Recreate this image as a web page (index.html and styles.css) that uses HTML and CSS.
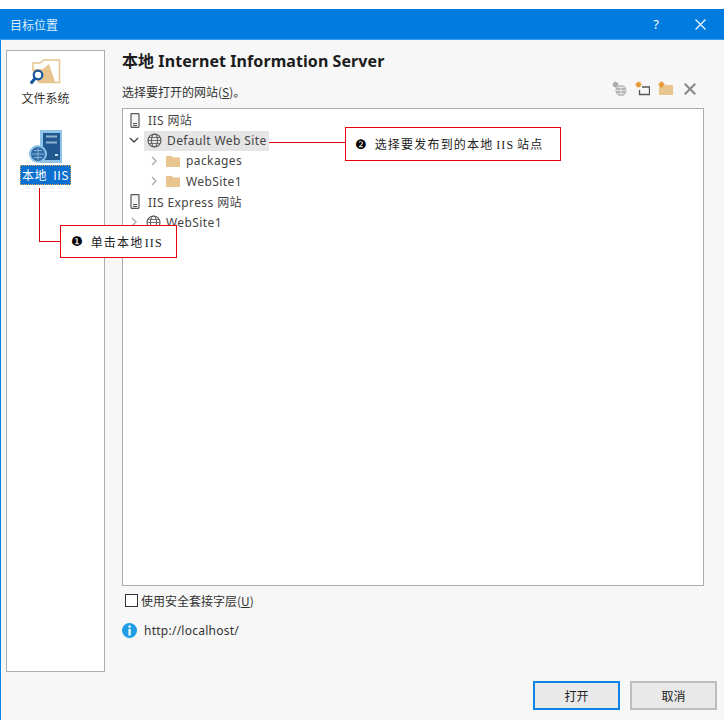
FILE: index.html
```html
<!DOCTYPE html>
<html lang="zh">
<head>
<meta charset="utf-8">
<title>目标位置</title>
<link rel="stylesheet" href="styles.css">
</head>
<body>
<div class="dialog">
  <header class="titlebar">
    <span class="title">目标位置</span>
    <div class="title-actions">
      <span class="help">?</span>
      <svg class="close" width="11" height="11" viewBox="0 0 11 11"><path d="M.5.5l10 10M10.500.5l-10 10" stroke="#fff" stroke-width="1.100" fill="none"/></svg>
    </div>
  </header>
  <div class="content">
    <aside class="sidebar">
      <div class="side-item first">
        <svg width="31" height="27" viewBox="0 0 31 27">
          <path d="M3 12V5h7l4-3h15.500v22.500H9z" fill="#fff" stroke="#e6c48c" stroke-width="1.500"/>
          <path d="M3 11h10l6-5 6.500 19H9z" fill="#e8c58e"/>
          <circle cx="8" cy="17" r="4.300" fill="#fff" stroke="#15599c" stroke-width="2.200"/>
          <path d="M5 20.500L.8 25.500" stroke="#15599c" stroke-width="3"/>
        </svg>
        <span class="side-label">文件系统</span>
      </div>
      <div class="side-item second">
        <svg width="33" height="33" viewBox="0 0 33 33">
          <rect x="11" y="0" width="22" height="33" fill="#8fc3ea"/>
          <rect x="14" y="3" width="17" height="27" fill="#20588f"/>
          <path d="M17 6.500h11M17 12.500h11" stroke="#8fb4d4" stroke-width="2"/>
          <rect x="26" y="24" width="3" height="2" fill="#cfe0ee"/>
          <circle cx="9" cy="24" r="9" fill="#8fc3ea"/>
          <circle cx="9" cy="24" r="7" fill="#2f6ba6"/>
          <path d="M3 24h12M9 18v12M5 20.500h8M5 27.500h8" stroke="#9cc0de" stroke-width=".8" fill="none"/>
        </svg>
        <span class="side-label selected">本地 IIS</span>
      </div>
    </aside>
    <main class="main">
      <h1 class="heading">本地 Internet Information Server</h1>
      <div class="toolbar-row">
        <span class="prompt">选择要打开的网站(<u>S</u>)。</span>
        <div class="tools">
          <svg width="15" height="15" viewBox="0 0 15 15">
            <path d="M3.500.5v6M.5 3.500h6M1.500 1.500l4 4M5.500 1.500l-4 4" stroke="#a8a8a8" stroke-width="1.300"/>
            <circle cx="9" cy="9.500" r="5.500" fill="#b5b5b5"/>
            <path d="M4 9.500h10M9 4.500v10M5.500 6.500h7M5.500 12.500h7" stroke="#eee" stroke-width=".8"/>
          </svg>
          <svg width="15" height="15" viewBox="0 0 15 15">
            <path d="M3.500.5v6M.5 3.500h6M1.500 1.500l4 4M5.500 1.500l-4 4" stroke="#e59a35" stroke-width="1.300"/>
            <path d="M7 6h7.500v7.500h-10V9" fill="none" stroke="#555" stroke-width="1.300"/>
          </svg>
          <svg width="15" height="15" viewBox="0 0 15 15">
            <path d="M1 6h4l2-2h8v10H1z" fill="#e8c58e"/>
            <path d="M3.500.5v6M.5 3.500h6M1.500 1.500l4 4M5.500 1.500l-4 4" stroke="#e59a35" stroke-width="1.300"/>
          </svg>
          <svg class="tool-x" width="12" height="12" viewBox="0 0 12 12"><path d="M.7.7l10.600 10.600M11.300.7L.7 11.300" stroke="#888" stroke-width="2" fill="none"/></svg>
        </div>
      </div>
      <div class="tree">
        <div class="row lvl0"><svg width="10" height="15" viewBox="0 0 10 15"><rect x="1" y=".6" width="8" height="13.800" rx=".8" fill="#f4f4f4" stroke="#555" stroke-width="1.200"/><path d="M3 10.500h4M3 12.500h4" stroke="#555"/></svg><span>IIS 网站</span></div>
        <div class="row lvl1">
          <svg width="10" height="7" viewBox="0 0 10 7"><path d="M1 1l4 4 4-4" fill="none" stroke="#444" stroke-width="1.400"/></svg>
          <span class="site-selected">
            <svg width="15" height="15" viewBox="0 0 15 15"><circle cx="7.500" cy="7.500" r="6.500" fill="none" stroke="#555" stroke-width="1.100"/><ellipse cx="7.500" cy="7.500" rx="3" ry="6.500" fill="none" stroke="#555"/><path d="M1 7.500h13M2 4.500h11M2 10.500h11" stroke="#555" stroke-width=".8"/></svg>
            <span>Default Web Site</span>
          </span>
        </div>
        <div class="row lvl2">
          <svg width="7" height="10" viewBox="0 0 7 10"><path d="M1 1l4 4-4 4" fill="none" stroke="#aaa" stroke-width="1.400"/></svg>
          <svg width="14" height="12" viewBox="0 0 14 12"><path d="M0 1h6l1 1.500h7V12H0z" fill="#e8c58e"/></svg>
          <span>packages</span>
        </div>
        <div class="row lvl2">
          <svg width="7" height="10" viewBox="0 0 7 10"><path d="M1 1l4 4-4 4" fill="none" stroke="#aaa" stroke-width="1.400"/></svg>
          <svg width="14" height="12" viewBox="0 0 14 12"><path d="M0 1h6l1 1.500h7V12H0z" fill="#e8c58e"/></svg>
          <span>WebSite1</span>
        </div>
        <div class="row lvl0"><svg width="10" height="15" viewBox="0 0 10 15"><rect x="1" y=".6" width="8" height="13.800" rx=".8" fill="#f4f4f4" stroke="#555" stroke-width="1.200"/><path d="M3 10.500h4M3 12.500h4" stroke="#555"/></svg><span>IIS Express 网站</span></div>
        <div class="row lvl1b">
          <svg width="7" height="10" viewBox="0 0 7 10"><path d="M1 1l4 4-4 4" fill="none" stroke="#aaa" stroke-width="1.400"/></svg>
          <svg width="15" height="15" viewBox="0 0 15 15"><circle cx="7.500" cy="7.500" r="6.500" fill="none" stroke="#555" stroke-width="1.100"/><ellipse cx="7.500" cy="7.500" rx="3" ry="6.500" fill="none" stroke="#555"/><path d="M1 7.500h13M2 4.500h11M2 10.500h11" stroke="#555" stroke-width=".8"/></svg>
          <span>WebSite1</span>
        </div>
      </div>
      <label class="check-row"><span class="checkbox"></span><span>使用安全套接字层(<u>U</u>)</span></label>
      <div class="url-row">
        <svg width="15" height="15" viewBox="0 0 15 15"><circle cx="7.500" cy="7.500" r="7.500" fill="#1f9ee6"/><rect x="6.500" y="2.500" width="2.200" height="2.200" fill="#fff"/><rect x="6.500" y="6" width="2.200" height="6.500" fill="#fff"/></svg>
        <span>http://localhost/</span>
      </div>
    </main>
  </div>
  <footer class="buttons">
    <button class="btn primary">打开</button>
    <button class="btn">取消</button>
  </footer>
  <div class="line line-a-v"></div>
  <div class="line line-a-h"></div>
  <div class="line line-b-h"></div>
  <div class="callout callout-a"><span class="mark">❶</span>单击本地 IIS</div>
  <div class="callout callout-b"><span class="mark">❷</span>选择要发布到的本地 IIS 站点</div>
</div>
</body>
</html>
```
FILE: styles.css
```css
html, body { margin: 0; padding: 0; background: #fff; }
body { width: 728px; height: 723px; overflow: hidden; font-family: "Noto Sans CJK SC", "Noto Sans", sans-serif; color: #222; }
.dialog { position: absolute; left: 0; top: 9px; width: 724px; height: 711px; box-sizing: border-box; background: #f7f7f7; border-left: 1px solid #0f84e4; display: flex; flex-direction: column; }
.titlebar { height: 31px; flex: none; margin-left: -1px; background: #007bdf; border-bottom: 1px solid #3d9ce8; box-sizing: border-box; color: #fff; display: flex; align-items: center; justify-content: space-between; padding: 0 18px 0 10px; font-size: 12px; }
.title { color: #dceefb; }
.title-actions { display: flex; align-items: center; gap: 36px; }
.help { font-family: "Noto Sans", sans-serif; font-size: 13px; }
.content { flex: 1; display: flex; padding: 10px 0 0 5px; min-height: 0; }
.sidebar { width: 97px; height: 620px; background: #fff; border: 1px solid #a9acb2; display: flex; flex-direction: column; align-items: center; flex: none; }
.side-item { display: flex; flex-direction: column; align-items: center; font-size: 12px; margin-right: 20px; }
.side-item.first { margin-top: 7px; gap: 4px; }
.side-item.second { margin-top: 23px; gap: 2px; }
.side-label { line-height: 18px; color: #333; }
.side-label.selected { background: #0a6fcf; color: #fff; line-height: 20px; padding: 0 2px; word-spacing: 3px; letter-spacing: .5px; outline: 1px dotted #d9a65a; outline-offset: -1px; }
.main { flex: 1; min-width: 0; padding-left: 17px; padding-right: 20px; display: flex; flex-direction: column; }
.heading { margin: 1px 0 0; font-size: 16px; font-weight: 700; line-height: 20px; letter-spacing: .07px; color: #1c1c1c; font-family: "Noto Sans", "Noto Sans CJK SC", sans-serif; }
.toolbar-row { display: flex; justify-content: space-between; align-items: center; height: 18px; margin-top: 11px; font-size: 12px; }
.prompt { color: #333; }
.tools { display: flex; gap: 8px; align-items: center; margin-right: 8px; margin-top: -5px; }
.tool-x { margin-left: 3px; }
.tree { height: 478px; flex: none; box-sizing: border-box; margin-top: 8px; background: #fff; border: 1px solid #a9acb2; padding-top: 1px; font-size: 12px; letter-spacing: .4px; color: #444; font-family: "Noto Sans", "Noto Sans CJK SC", sans-serif; }
.row { height: 20.400px; display: flex; align-items: center; }
.lvl0 { padding-left: 7px; gap: 8px; }
.lvl1 { padding-left: 6px; gap: 5px; }
.lvl1b { padding-left: 8px; gap: 8px; }
.lvl1b span { margin-left: -3px; }
.lvl2 { padding-left: 28px; gap: 8px; }
.lvl2 span { margin-left: -2px; }
.site-selected { display: flex; align-items: center; gap: 5px; background: #e5e5e5; padding: 0 2px 0 3px; height: 20px; }
.check-row { display: flex; align-items: center; gap: 3px; font-size: 12px; margin-top: 6px; height: 16px; padding-left: 3px; color: #333; }
.checkbox { width: 11px; height: 11px; background: #fff; border: 1px solid #333; }
.url-row { display: flex; align-items: center; gap: 7px; margin-top: 14px; font-size: 12px; letter-spacing: .25px; color: #333; font-family: "Noto Sans", sans-serif; }
.buttons { height: 48px; flex: none; display: flex; justify-content: flex-end; gap: 10px; padding-right: 7px; padding-top: 9px; box-sizing: border-box; }
.btn { width: 87px; height: 29px; box-sizing: border-box; background: #e9e9e9; border: 2px solid #bdbdbd; font: 12px "Noto Sans CJK SC", sans-serif; color: #222; padding: 0; }
.btn.primary { border-color: #0f84e4; }
.callout { position: absolute; background: #fff; border: 1px solid #e8000d; box-sizing: border-box; font-family: "Liberation Serif", "Noto Sans CJK SC", serif; font-size: 12px; color: #222; display: flex; align-items: center; letter-spacing: 1.200px; white-space: nowrap; }
.mark { font-family: "DejaVu Sans", sans-serif; font-size: 13px; margin-right: 8px; color: #000; letter-spacing: 0; }
.callout-a { left: 59px; top: 216px; width: 117px; height: 33px; padding-left: 10px; word-spacing: -3px; }
.callout-b { left: 344px; top: 118px; width: 216px; height: 34px; padding-left: 9px; word-spacing: -1.500px; }
.line { position: absolute; background: #d90012; }
.line-a-v { left: 38px; top: 179px; width: 1px; height: 54px; }
.line-a-h { left: 38px; top: 232px; width: 21px; height: 1px; }
.line-b-h { left: 268px; top: 133px; width: 76px; height: 1px; }
```
